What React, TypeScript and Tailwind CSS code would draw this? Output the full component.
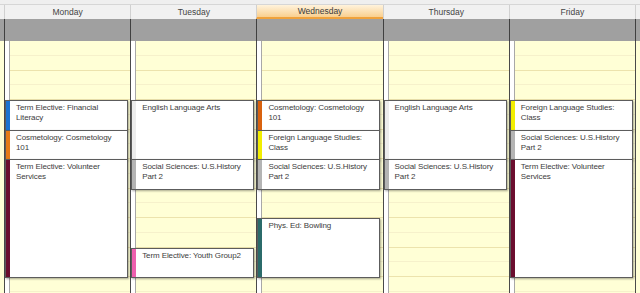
import React from 'react';

type Appt = { start: number; end: number; text: string; bar: string };

const SLOT = 14.75;

const days: { name: string; active?: boolean; appts: Appt[] }[] = [
  {
    name: 'Monday',
    appts: [
      { start: 4, end: 6, text: 'Term Elective: Financial Literacy', bar: 'bg-[#1a72d0]' },
      { start: 6, end: 8, text: 'Cosmetology: Cosmetology 101', bar: 'bg-[#e57a16]' },
      { start: 8, end: 16, text: 'Term Elective: Volunteer Services', bar: 'bg-[#6a0d2e]' },
    ],
  },
  {
    name: 'Tuesday',
    appts: [
      { start: 4, end: 8, text: 'English Language Arts', bar: 'bg-[#ececec]' },
      { start: 8, end: 10, text: 'Social Sciences: U.S.History Part 2', bar: 'bg-[#b4b4b4]' },
      { start: 14, end: 16, text: 'Term Elective: Youth Group2', bar: 'bg-[#ee5fae]' },
    ],
  },
  {
    name: 'Wednesday',
    active: true,
    appts: [
      { start: 4, end: 6, text: 'Cosmetology: Cosmetology 101', bar: 'bg-[#d9620e]' },
      { start: 6, end: 8, text: 'Foreign Language Studies: Class', bar: 'bg-[#f2ee00]' },
      { start: 8, end: 10, text: 'Social Sciences: U.S.History Part 2', bar: 'bg-[#b4b4b4]' },
      { start: 12, end: 16, text: 'Phys. Ed: Bowling', bar: 'bg-[#2b6b6a]' },
    ],
  },
  {
    name: 'Thursday',
    appts: [
      { start: 4, end: 8, text: 'English Language Arts', bar: 'bg-[#ececec]' },
      { start: 8, end: 10, text: 'Social Sciences: U.S.History Part 2', bar: 'bg-[#b4b4b4]' },
    ],
  },
  {
    name: 'Friday',
    appts: [
      { start: 4, end: 6, text: 'Foreign Language Studies: Class', bar: 'bg-[#f2ee00]' },
      { start: 6, end: 8, text: 'Social Sciences: U.S.History Part 2', bar: 'bg-[#b4b4b4]' },
      { start: 8, end: 16, text: 'Term Elective: Volunteer Services', bar: 'bg-[#6a0d2e]' },
    ],
  },
];

const rows = Array.from({ length: 17 }, (_, i) => i);

function DayColumn({ appts }: { appts: Appt[] }) {
  return (
    <div className="relative flex flex-1 border-l border-[#4a4a4a]">
      <div className="w-[4px] bg-white" />
      <div className="w-px bg-[#a8a8a8]" />
      <div className="flex flex-1 flex-col">
        {rows.map((i) => (
          <div
            key={i}
            className={
              i % 2 === 1
                ? 'h-[14.75px] shrink-0 border-b border-[#ece3ad]'
                : 'h-[14.75px] shrink-0 border-b border-[#f6f1cb]'
            }
          />
        ))}
      </div>
      {appts.map((a) => (
        <div
          key={a.text + a.start}
          className="absolute left-0 flex w-[123px] border border-[#5c5c5c] bg-white shadow-[1px_1px_2px_rgba(0,0,0,0.35)]"
          style={{ top: a.start * SLOT, height: (a.end - a.start) * SLOT + 1 }}
        >
          <div className={`w-[4px] shrink-0 ${a.bar}`} />
          <div className="pl-[6px] pr-[2px] pt-[2px] text-[8px] leading-[10px] tracking-[-0.1px] text-[#3c3c3c]">{a.text}</div>
        </div>
      ))}
    </div>
  );
}

export default function App() {
  return (
    <div className="flex h-[293px] w-[640px] flex-col overflow-hidden bg-[#ffffd6] font-['Liberation_Sans',Arial,sans-serif]">
      <div className="h-[5px] shrink-0 border-b border-[#d6d6d6] bg-[#efefef]" />
      <div className="flex h-[14px] shrink-0 bg-[#f1f1f1] px-[4px]">
        {days.map((d) => (
          <div
            key={d.name}
            className={
              d.active
                ? 'flex flex-1 items-center justify-center border-b-2 border-l border-b-[#f0a23c] border-l-[#d0d0d0] bg-gradient-to-b from-[#fff3dc] to-[#f9cf8e] text-[8.5px] text-[#3a3a3a]'
                : 'flex flex-1 items-center justify-center border-l border-[#d0d0d0] text-[8.5px] text-[#444444]'
            }
          >
            {d.name}
          </div>
        ))}
        <div className="w-0 border-l border-[#d0d0d0]" />
      </div>
      <div className="flex h-[22px] shrink-0 bg-[#a0a0a0] px-[4px]">
        {days.map((d) => (
          <div key={d.name} className="flex-1 border-l border-[#404040]" />
        ))}
        <div className="w-0 border-l border-[#404040]" />
      </div>
      <div className="flex flex-1 px-[4px]">
        {days.map((d) => (
          <DayColumn key={d.name} appts={d.appts} />
        ))}
        <div className="w-0 border-l border-[#4a4a4a]" />
      </div>
    </div>
  );
}
